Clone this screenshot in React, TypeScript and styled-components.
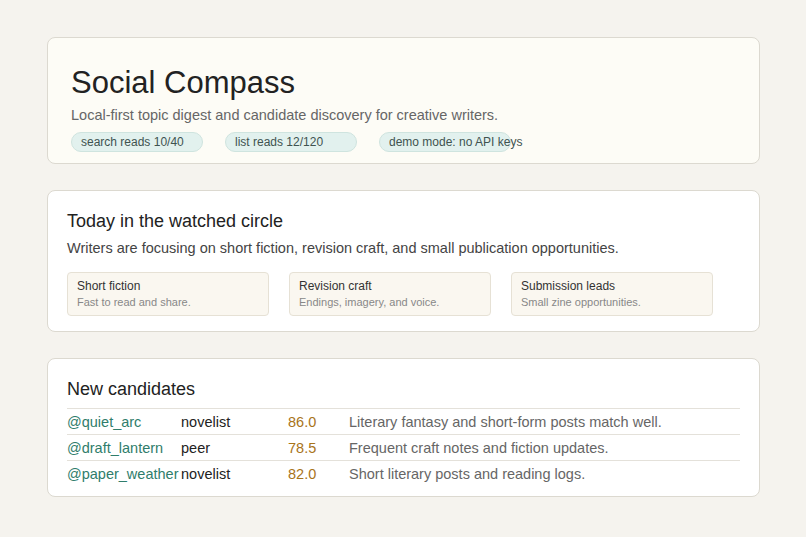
import React from "react";
import styled, { createGlobalStyle } from "styled-components";

const Global = createGlobalStyle`
  body { margin: 0; background: #f5f3ee; font-family: "Liberation Sans", Arial, sans-serif; }
`;

const Page = styled.div`
  padding: 37px 46px 40px 47px;
  display: flex;
  flex-direction: column;
  gap: 26px;
`;

const Card = styled.section<{ $tone?: string; $pad: string }>`
  background: ${(p) => p.$tone || "#ffffff"};
  border: 1px solid #dcd9d0;
  border-radius: 8px;
  padding: ${(p) => p.$pad};
`;

const Title = styled.h1`
  margin: 0;
  font-size: 31px;
  font-weight: 400;
  color: #222;
  line-height: 36px;
`;

const Sub = styled.p`
  margin: 6px 0 9px;
  font-size: 14.5px;
  color: #666;
`;

const Chips = styled.div`
  display: flex;
  gap: 22px;
`;

const Chip = styled.span`
  width: 132px;
  height: 20px;
  box-sizing: border-box;
  border-radius: 10px;
  background: #e2f1ee;
  border: 1px solid #cfe4df;
  font-size: 12px;
  color: #3f5350;
  padding-left: 9px;
  line-height: 18px;
  white-space: nowrap;
`;

const Heading = styled.h2`
  margin: 0;
  font-size: 18px;
  font-weight: 400;
  color: #222;
`;

const Lead = styled.p`
  margin: 8px 0 16px;
  font-size: 14.5px;
  color: #444;
`;

const Tiles = styled.div`
  display: grid;
  grid-template-columns: repeat(3, 202px);
  gap: 20px;
`;

const Tile = styled.div`
  background: #faf7f0;
  border: 1px solid #e6e1d5;
  border-radius: 4px;
  padding: 6px 9px 7px;
  height: 44px;
  box-sizing: border-box;
`;

const TileName = styled.div`
  font-size: 12px;
  color: #333;
`;

const TileNote = styled.div`
  font-size: 11px;
  color: #888;
  margin-top: 3px;
`;

const Table = styled.div`
  margin-top: 8px;
  margin-right: 0;
`;

const Row = styled.div`
  display: grid;
  grid-template-columns: 114px 107px 61px 1fr;
  border-top: 1px solid #e4e1da;
  height: 25px;
  align-items: center;
  font-size: 14.5px;
`;

const Handle = styled.span`
  color: #2f7d6b;
`;
const Role = styled.span`
  color: #222;
`;
const Score = styled.span`
  color: #a8741a;
`;
const Why = styled.span`
  color: #666;
`;

const topics = [
  ["Short fiction", "Fast to read and share."],
  ["Revision craft", "Endings, imagery, and voice."],
  ["Submission leads", "Small zine opportunities."],
];

const candidates = [
  ["@quiet_arc", "novelist", "86.0", "Literary fantasy and short-form posts match well."],
  ["@draft_lantern", "peer", "78.5", "Frequent craft notes and fiction updates."],
  ["@paper_weather", "novelist", "82.0", "Short literary posts and reading logs."],
];

export default function App() {
  return (
    <>
      <Global />
      <Page>
        <Card $tone="#fdfcf6" $pad="27px 22px 11px 23px">
          <Title>Social Compass</Title>
          <Sub>Local-first topic digest and candidate discovery for creative writers.</Sub>
          <Chips>
            <Chip>search reads 10/40</Chip>
            <Chip>list reads 12/120</Chip>
            <Chip>demo mode: no API keys</Chip>
          </Chips>
        </Card>
        <Card $pad="20px 19px 15px 19px">
          <Heading>Today in the watched circle</Heading>
          <Lead>Writers are focusing on short fiction, revision craft, and small publication opportunities.</Lead>
          <Tiles>
            {topics.map(([n, d]) => (
              <Tile key={n}>
                <TileName>{n}</TileName>
                <TileNote>{d}</TileNote>
              </Tile>
            ))}
          </Tiles>
        </Card>
        <Card $pad="20px 19px 10px 19px">
          <Heading>New candidates</Heading>
          <Table>
            {candidates.map(([h, r, s, w]) => (
              <Row key={h}>
                <Handle>{h}</Handle>
                <Role>{r}</Role>
                <Score>{s}</Score>
                <Why>{w}</Why>
              </Row>
            ))}
          </Table>
        </Card>
      </Page>
    </>
  );
}
